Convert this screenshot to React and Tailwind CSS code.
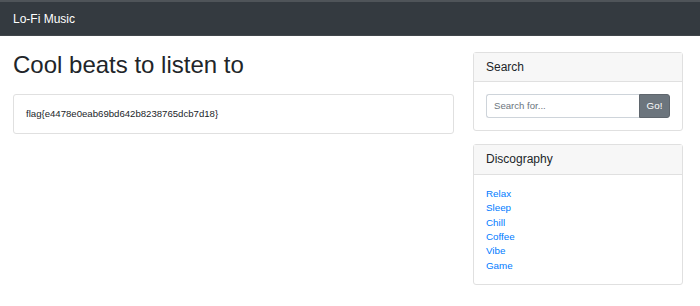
export default function App() {
  const links = ["Relax", "Sleep", "Chill", "Coffee", "Vibe", "Game"];
  return (
    <div className="w-[700px] h-[306px] bg-white text-[#212529] font-['Liberation_Sans',Arial,sans-serif] overflow-hidden">
      <nav className="h-[36px] bg-[#343a40] border-t-2 border-b border-t-[#4f5459] border-b-[#41464b] flex items-center px-[13px]">
        <span className="text-white text-[12px] leading-[14px]">Lo-Fi Music</span>
      </nav>
      <div className="flex px-[13px] gap-[19px]">
        <div className="w-[441px]">
          <h1 className="mt-[15px] mb-[14px] text-[24px] leading-[28.8px] font-normal">Cool beats to listen to</h1>
          <div className="border border-[#e0e0e0] rounded-[3px] px-[12px] py-[12px] text-[9.6px] leading-[14.4px]">
            flag{"{"}e4478e0eab69bd642b8238765dcb7d18{"}"}
          </div>
        </div>
        <div className="w-[210px]">
          <div className="mt-[16px] border border-[#e0e0e0] rounded-[3px]">
            <div className="bg-[#f7f7f7] border-b border-[#e0e0e0] px-[12px] py-[7px] text-[12px] leading-[14.4px]">Search</div>
            <div className="p-[12px] flex">
              <div className="flex-1 h-[24px] border border-[#ced4da] border-r-0 rounded-l-[3px] flex items-center px-[7px] text-[9.6px] text-[#6c757d]">Search for...</div>
              <div className="w-[31px] h-[24px] bg-[#6c757d] border border-[#5f666d] rounded-r-[3px] flex items-center justify-center text-white text-[9.8px]">Go!</div>
            </div>
          </div>
          <div className="mt-[13px] border border-[#e0e0e0] rounded-[3px]">
            <div className="bg-[#f7f7f7] border-b border-[#e0e0e0] px-[12px] py-[7px] text-[12px] leading-[14.4px]">Discography</div>
            <ul className="px-[12px] pt-[12px] pb-[11px] text-[9.8px] leading-[14.4px] text-[#007bff]">
              {links.map((l) => (
                <li key={l}>{l}</li>
              ))}
            </ul>
          </div>
        </div>
      </div>
    </div>
  );
}
